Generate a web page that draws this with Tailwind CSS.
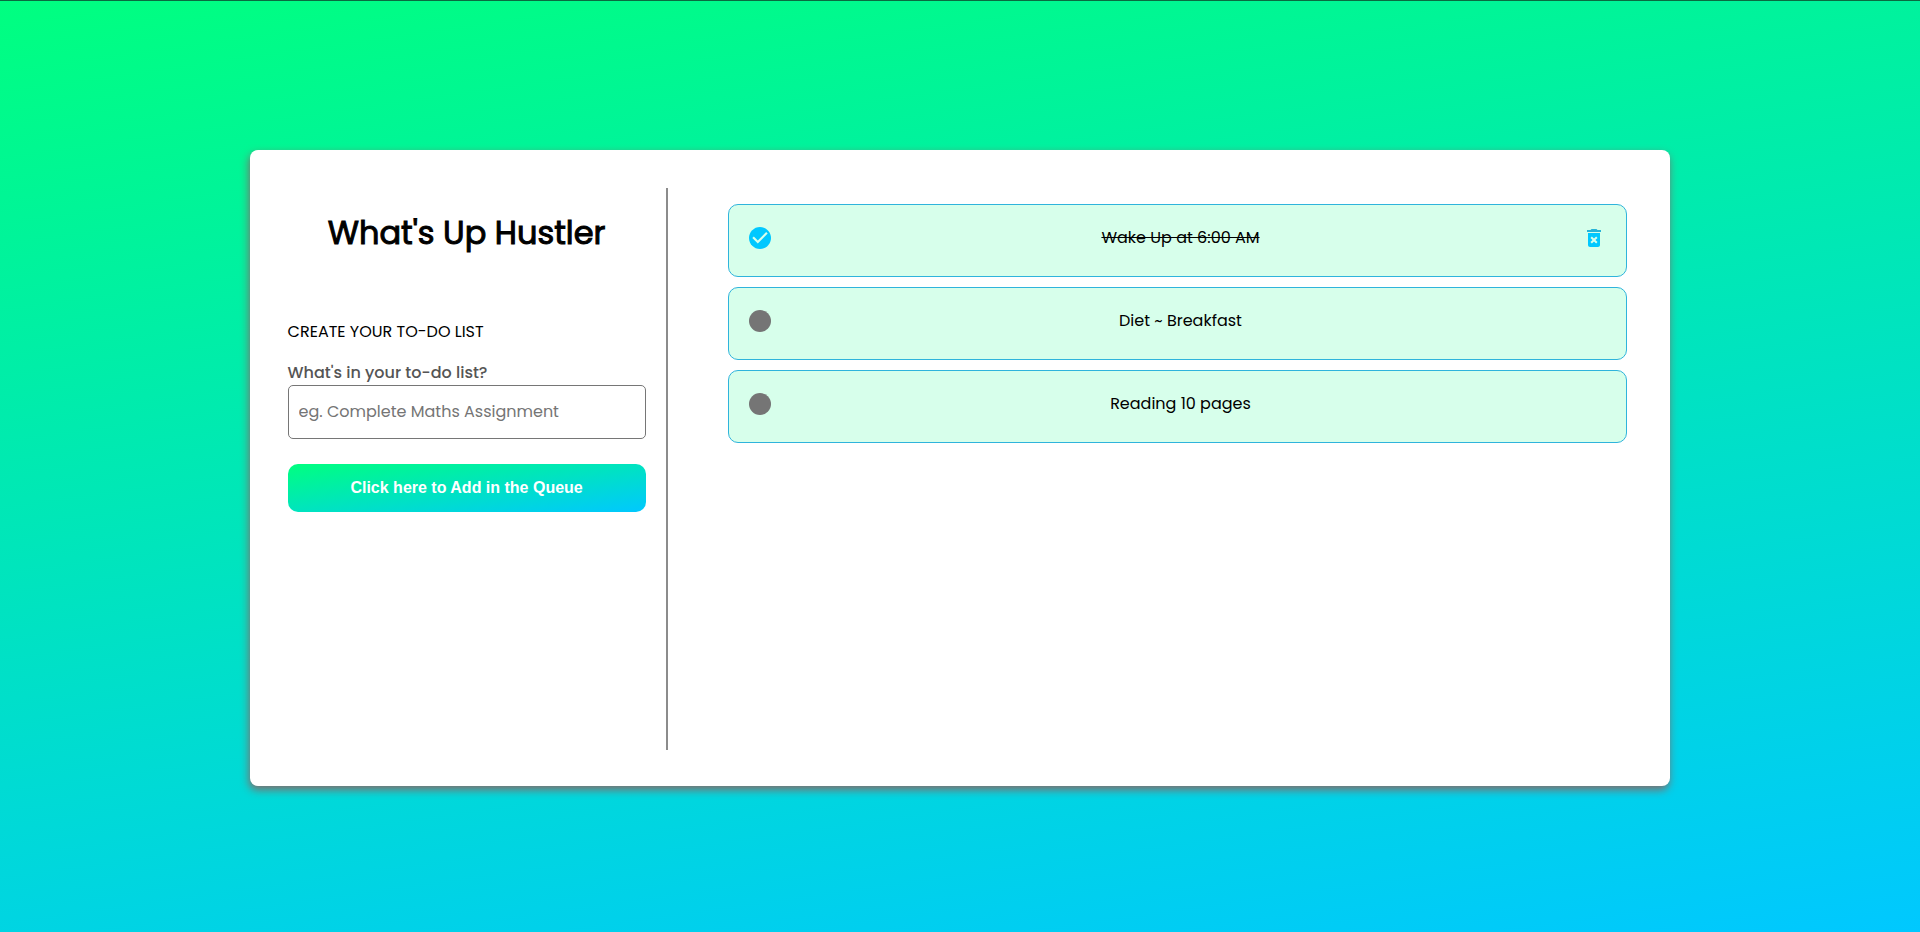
<!DOCTYPE html>
<html lang="en">
<head>
<meta charset="utf-8">
<meta name="viewport" content="width=device-width, initial-scale=1">
<title>What's Up Hustler</title>
<script src="https://cdn.jsdelivr.net/npm/@tailwindcss/browser@4"></script>
</head>
<body class="flex min-h-screen items-center justify-center border-t border-[#0a6a40] bg-[linear-gradient(172deg,#00ff80,#00c8ff)] pt-0.5 font-[Poppins,Inter,sans-serif] text-base text-black">
<main class="flex min-h-[636px] w-[74%] flex-wrap rounded-lg bg-white px-[38px] pt-[38px] pb-9 shadow-[-1px_4px_8px_#806c6c] lg:flex-nowrap">
  <section class="w-full shrink-0 border-[#8c8c8c] pr-5 lg:w-[380px] lg:border-r-2">
    <h1 class="pt-[21px] text-center text-[32px] leading-[48px] font-normal [-webkit-text-stroke:1px]">What's Up Hustler</h1>
    <form class="flex flex-col pt-[63px]">
      <p class="text-base leading-6">CREATE YOUR TO-DO LIST</p>
      <label for="task" class="mt-[17px] text-base leading-6 font-medium text-[#555]">What's in your to-do list?</label>
      <input id="task" type="text" placeholder="eg. Complete Maths Assignment" class="h-[54px] rounded-[5px] border border-[#767676] px-2.5 text-base placeholder:text-[#757575]">
      <button type="button" class="mt-[25px] h-12 rounded-[10px] bg-[linear-gradient(172deg,#00ff80,#00c8ff)] font-['Liberation_Sans',Arial,sans-serif] text-base font-bold text-white">Click here to Add in the Queue</button>
    </form>
  </section>
  <ul class="flex grow flex-col gap-2.5 pt-4 lg:pr-[5px] lg:pl-[60px]">
    <li class="grid grid-cols-[30px_1fr_24px] rounded-[10px] border border-[#2fb4dc] bg-[#d7ffeb] px-5 pt-[21px] pb-[26px]">
      <button type="button" aria-label="Mark as not done" class="size-[22px] self-center">
        <svg viewBox="2 2 20 20" class="size-[22px] fill-[#00c8ff]"><path d="M12 2C6.48 2 2 6.48 2 12s4.48 10 10 10 10-4.48 10-10S17.52 2 12 2z"/><path class="fill-[#d7ffeb]" d="M10 17l-5-5 1.41-1.41L10 14.17l7.590-7.590L19 8l-9 9z"/></svg>
      </button>
      <span class="text-center leading-6 line-through">Wake Up at 6:00 AM</span>
      <button type="button" aria-label="Delete task" class="size-6">
        <svg viewBox="0 0 24 24" class="size-6 fill-[#00c8ff]"><path d="M6 19c0 1.100.9 2 2 2h8c1.100 0 2-.9 2-2V7H6v12zm2.460-7.120l1.410-1.410L12 12.590l2.120-2.120 1.410 1.410L13.410 14l2.120 2.120-1.410 1.410L12 15.410l-2.120 2.120-1.410-1.410L10.590 14l-2.130-2.120z"/><path class="fill-[#27b4d8]" d="M15.500 4l-1-1h-5l-1 1H5v2h14V4z"/></svg>
      </button>
    </li>
    <li class="grid grid-cols-[30px_1fr_24px] rounded-[10px] border border-[#2fb4dc] bg-[#d7ffeb] px-5 pt-[21px] pb-[26px]">
      <button type="button" aria-label="Mark as done" class="size-[22px] self-center rounded-full bg-[#757575]"></button>
      <span class="text-center leading-6">Diet ~ Breakfast</span>
    </li>
    <li class="grid grid-cols-[30px_1fr_24px] rounded-[10px] border border-[#2fb4dc] bg-[#d7ffeb] px-5 pt-[21px] pb-[26px]">
      <button type="button" aria-label="Mark as done" class="size-[22px] self-center rounded-full bg-[#757575]"></button>
      <span class="text-center leading-6">Reading 10 pages</span>
    </li>
  </ul>
</main>
</body>
</html>
